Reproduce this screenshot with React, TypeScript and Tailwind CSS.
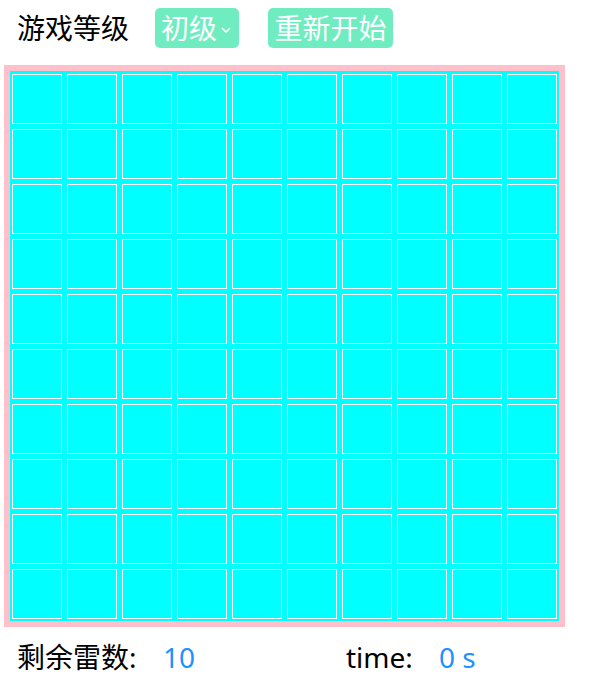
import React from "react";

const font = { fontFamily: '"Noto Sans", "Noto Sans CJK SC", sans-serif' };

export default function App() {
  const cells = Array.from({ length: 100 }, (_, i) => i);
  return (
    <div className="w-[589px] h-[680px] bg-white pl-[4px] pt-[8px] font-['Noto_Sans','Noto_Sans_CJK_SC',sans-serif]">
      <div className="flex items-center h-[40px] text-[28px] leading-none">
        <span className="ml-[13px] text-black">游戏等级</span>
        <div className="ml-[26px] h-[40px] w-[84px] rounded-[5px] bg-[#6fedc0] text-white flex items-center pl-[6px]">
          <span>初级</span>
          <svg className="ml-[4px] mt-[4px]" width="10" height="6" viewBox="0 0 10 6" fill="none">
            <path d="M1 1 L5 5 L9 1" stroke="white" strokeWidth="1.5" />
          </svg>
        </div>
        <div className="ml-[29px] h-[40px] w-[125px] rounded-[5px] bg-[#6fedc0] text-white flex items-center justify-center">
          重新开始
        </div>
      </div>
      <div className="mt-[17px] w-[561px] border-[6px] border-[#ffc0cb] bg-[#00ffff] overflow-hidden">
        <div className="grid grid-cols-[repeat(10,55px)] auto-rows-[55px]">
          {cells.map((i) => (
            <div key={i} className="ml-[2px] mt-[3px] w-[50px] h-[50px] border border-white" />
          ))}
        </div>
      </div>
      <div className="flex items-center mt-[16px] text-[28px] leading-none" style={font}>
        <span className="ml-[13px] w-[146px] text-black">剩余雷数:</span>
        <span className="w-[183px] text-[#1e90ff]">10</span>
        <span className="w-[93px] text-black">time:</span>
        <span className="text-[#1e90ff]">0 s</span>
      </div>
    </div>
  );
}
